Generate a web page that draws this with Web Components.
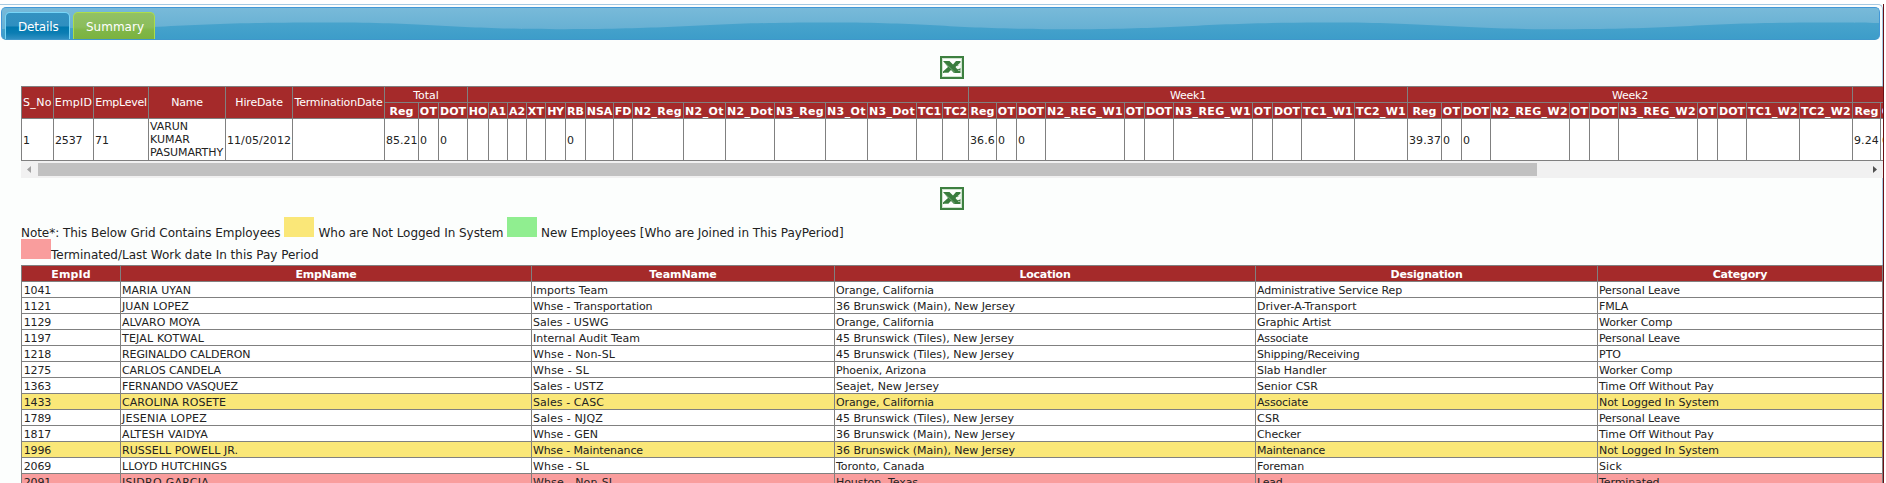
<!DOCTYPE html>
<html lang="en">
<head>
<meta charset="utf-8">
<title>Payroll Summary</title>
<style>
html, body { margin: 0; height: 483px; overflow: hidden; background: #fff; }
body { font: 11px/13px "DejaVu Sans", sans-serif; color: #222; }
</style>
</head>
<body>
<payroll-page></payroll-page>
<script>
const define = (name, html, setup) => {
  const tpl = document.createElement('template');
  tpl.innerHTML = html;
  customElements.define(name, class extends HTMLElement {
    connectedCallback() {
      if (this.shadowRoot) return;
      const root = this.attachShadow({ mode: 'open' });
      root.append(tpl.content.cloneNode(true));
      if (setup) setup.call(this, root);
    }
  });
};

/* A label whose tracking is adjusted so that it takes the width it is given. */
define('fit-text', `<style>:host{display:inline-block;white-space:nowrap;letter-spacing:-.12px}</style><slot></slot>`, function () {
  const w = parseFloat(this.getAttribute('w'));
  if (!w) return;
  this.style.letterSpacing = '0';
  const natural = this.getBoundingClientRect().width;
  this.style.letterSpacing = ((w - natural) / this.textContent.length).toFixed(3) + 'px';
});

define('excel-icon', `<style>:host{display:block;width:24px;height:23px}svg{display:block}</style>
<svg width="24" height="23" viewBox="0 0 24 23">
<rect width="24" height="23" fill="#3d8040"/><rect x="2" y="2" width="20" height="19" fill="#fdfffd"/>
<rect x="2.5" y="2.5" width="19" height="18" fill="none" stroke="#cfe3cf" stroke-width="1"/>
<path d="M15 9.500h5M17 13.500h3" stroke="#8fbb8f" stroke-width="1"/>
<path d="M3 5h6.500l3.500 3.500L16 5h4.500v1.500L15.500 11l2 2.500L20.500 12v5H14l-3-3-3 3H3v-1.500L8 11z" fill="#3a7d3e"/>
<path d="M4.500 6.500l10.500 10M4 16.500h4" stroke="#7db07f" stroke-width=".8" fill="none"/>
<path d="M17 11l3.500-3v3.500L18 13zM18 14.500h2.500" fill="#fff" stroke="#dcebdc" stroke-width=".6"/>
</svg>`);

define('page-tab', `<style>
:host{display:block;box-sizing:border-box;width:65px;height:28px;padding:7px 0 0 12px;border:1px solid #77d5f7;border-bottom:0;border-radius:5px 5px 0 0;color:#fff;font-size:12px;line-height:14px;
background:linear-gradient(#3392c1,#2f8fc0 13px,#0078ae 14px,#0b7db3 20px,#3592c4)}
:host([active]){width:82px;border-color:#acdd4a;background:linear-gradient(#92c165,#8bbd5b 14px,#80b748 17px,#7ab23e)}
</style><slot></slot>`);

define('tab-bar', `<style>
:host{display:flex;gap:3px;box-sizing:border-box;position:relative;width:1879px;height:33px;margin-left:1px;padding:4px 0 0 3px;border:1px solid #4297d7;border-bottom-color:#3f97ca;border-radius:5px;overflow:hidden;background:linear-gradient(#51a9cf,#3d9dc9)}
svg{position:absolute;left:0;top:0}
::slotted(*){position:relative}
</style>
<svg width="1878" height="32"><defs>
<linearGradient id="g" x1="0" y1="0" x2="0" y2="1"><stop offset="0" stop-color="#78bad9"/><stop offset="1" stop-color="#67b0d3"/></linearGradient></defs>
<path fill="url(#g)" d="M0 0H1878V15C1850 14.500 1838 14.500 1820 14.500C1700 14.500 1680 21.200 1563 21.200S1440 14.500 1320 14.500S1180 21.200 1063 21.200S940 14.500 820 14.500S680 21.200 563 21.200S440 14.500 320 14.500C230 14.500 200 17 150 19L0 21Z"/></svg>
<slot></slot>`);

define('colour-swatch', `<style>:host{display:block;width:30px;height:20px;flex:none}</style>`, function () {
  this.style.background = this.getAttribute('colour');
});

define('legend-note', `<style>
:host{display:block;font-size:12px;line-height:14px}
div{display:flex;align-items:baseline;height:22px}
</style>
<div><fit-text w="259.500">Note*: This Below Grid Contains Employees</fit-text><colour-swatch colour="#fae778" style="margin-left:3.500px"></colour-swatch><fit-text w="185" style="margin-left:4.500px">Who are Not Logged In System</fit-text><colour-swatch colour="#90ee90" style="margin-left:3.500px"></colour-swatch><fit-text w="302.500" style="margin-left:4px">New Employees [Who are Joined in This PayPeriod]</fit-text></div>
<div><colour-swatch colour="#f99d9d"></colour-swatch><fit-text w="267.500">Terminated/Last Work date In this Pay Period</fit-text></div>`);

/* Grid whose 1px gaps show through as the rules. */
const gridCss = `
.g{display:grid;gap:1px;background:#808080;border:1px solid #808080;width:max-content}
.c{background:#fff;padding:2px 1px 0;display:flex;align-items:center;box-sizing:border-box;min-width:0}
.h{background:#a52a2a;color:#fff;justify-content:center}
.b{font-weight:bold}`;
const t = (s, w) => s === '' ? '' : `<fit-text${w ? ` w="${w}"` : ''}>${s}</fit-text>`;

define('hours-grid', `<style>:host{display:block;width:1862px;height:75px;overflow:hidden}${gridCss}
.g{grid-template-rows:15px 15px 41px}.tall{grid-row:span 2;padding:0 1px}.name{flex-direction:column;align-items:flex-start;padding-top:1px}</style><div class="g"></div>`, function (root) {
  const x = [21,53,93,148,225,292,384,418,438,467,488,507,526,545,565,585,613,632,683,725,774,825,867,916,942,968,996,1016,1045,1124,1144,1173,1252,1272,1301,1354,1407,1441,1461,1490,1569,1589,1618,1697,1717,1746,1799,1852,1880,1900];
  const g = root.querySelector('.g');
  g.style.gridTemplateColumns = x.slice(1).map((v, i) => v - x[i] - 1 + 'px').join(' ');
  const fixed = [['S_No',29],['EmpID',37.5],['EmpLevel',51.5],['Name',31.5],['HireDate',47.5],['TerminationDate',88]];
  const groups = [['Total',3,25.5],['',16],['Week1',11,36],['Week2',11,36],['',2]];
  const W = { Reg:24, OT:17.5, DOT:26, HO:18.5, A1:16, A2:16, XT:16.5, HY:16.5, RB:17, NSA:25.5, FD:16.5, N2_Reg:48, N2_Ot:39, N2_Dot:46, N3_Reg:48, N3_Ot:39, N3_Dot:46, TC1:23, TC2:23 };
  const week = n => ['Reg','OT','DOT','N2_REG_W'+n,'OT','DOT','N3_REG_W'+n,'OT','DOT','TC1_W'+n,'TC2_W'+n];
  const subs = ['Reg','OT','DOT','HO','A1','A2','XT','HY','RB','NSA','FD','N2_Reg','N2_Ot','N2_Dot','N3_Reg','N3_Ot','N3_Dot','TC1','TC2',...week(1),...week(2),'Reg','OT'];
  const values = Array(49).fill('');
  Object.assign(values, {0:'1',1:t('2537',27.5),2:'71',4:t('11/05/2012',64),6:t('85.21',31.5),7:'0',8:'0',14:'0',25:t('36.6',25),26:'0',27:'0',36:t('39.37',32),37:'0',38:'0',47:t('9.24',25),48:'0'});
  let html = fixed.map(f => `<div class="c h tall">${t(...f)}</div>`).join('');
  html += groups.map(([s, n, w]) => `<div class="c h" style="grid-column:span ${n}">${t(s, w)}</div>`).join('');
  html += subs.map(s => `<div class="c h b">${t(s, W[s] || (s.startsWith('TC') ? 50 : 76))}</div>`).join('');
  html += values.map((v, i) => i === 3 ? `<div class="c name">${t('VARUN',38)}${t('KUMAR',40)}${t('PASUMARTHY',73)}</div>` : `<div class="c">${v}</div>`).join('');
  g.innerHTML = html;
});

define('scroll-strip', `<style>
:host{display:flex;align-items:center;width:1862px;height:17px;background:#f1f1f1}
i{width:1499px;height:13px;background:#c1c1c1;margin-right:auto}
svg{width:17px;height:17px;flex:none}
</style><svg viewBox="0 0 17 17"><path d="M10 5v7L6 8.500z" fill="#a3a3a3"/></svg><i></i><svg viewBox="0 0 17 17"><path d="M7 5v7l4-3.500z" fill="#505050"/></svg>`);

define('employee-grid', `<style>:host{display:block}${gridCss}
.g{grid-template-columns:98px 410px 302px 420px 341px 284px;grid-auto-rows:15px}
.id{padding-left:1.700px}
.y{background:#fae778}.r{background:#f99d9d}</style><div class="g"></div>`, function (root) {
  const W = {'MARIA UYAN':68,'JUAN LOPEZ':66,'ALVARO MOYA':77,'TEJAL KOTWAL':81,'REGINALDO CALDERON':127.5,'CARLOS CANDELA':98,'FERNANDO VASQUEZ':115,'CAROLINA ROSETE':103,'JESENIA LOPEZ':84,'ALTESH VAIDYA':85,'RUSSELL POWELL JR.':115,'LLOYD HUTCHINGS':104,'ISIDRO GARCIA':86,
  'Imports Team':74,'Whse - Transportation':118.5,'Sales - USWG':74.5,'Internal Audit Team':106,'Whse - Non-SL':81,'Whse - SL':55,'Sales - USTZ':69.5,'Sales - CASC':70,'Sales - NJQZ':69,'Whse - GEN':64,'Whse - Maintenance':109,
  'Orange, California':97,'36 Brunswick (Main), New Jersey':178,'45 Brunswick (Tiles), New Jersey':177,'Phoenix, Arizona':89,'Seajet, New Jersey':102,'Toronto, Canada':87.5,'Houston, Texas':81,
  'Administrative Service Rep':144,'Driver-A-Transport':98.5,'Graphic Artist':73,'Associate':50,'Shipping/Receiving':101.5,'Slab Handler':68.5,'Senior CSR':60,'CSR':22,'Checker':43,'Maintenance':67,'Foreman':46,'Lead':24.5,
  'Personal Leave':80,'FMLA':28,'Worker Comp':72.5,'PTO':21,'Time Off Without Pay':113.5,'Not Logged In System':119,'Sick':22,'Terminated':59.5,
  'EmpId':39,'EmpName':60.5,'TeamName':67,'Location':50.5,'Designation':71.5,'Category':54};
  const rows = `1041|MARIA UYAN|Imports Team|Orange, California|Administrative Service Rep|Personal Leave
1121|JUAN LOPEZ|Whse - Transportation|36 Brunswick (Main), New Jersey|Driver-A-Transport|FMLA
1129|ALVARO MOYA|Sales - USWG|Orange, California|Graphic Artist|Worker Comp
1197|TEJAL KOTWAL|Internal Audit Team|45 Brunswick (Tiles), New Jersey|Associate|Personal Leave
1218|REGINALDO CALDERON|Whse - Non-SL|45 Brunswick (Tiles), New Jersey|Shipping/Receiving|PTO
1275|CARLOS CANDELA|Whse - SL|Phoenix, Arizona|Slab Handler|Worker Comp
1363|FERNANDO VASQUEZ|Sales - USTZ|Seajet, New Jersey|Senior CSR|Time Off Without Pay
1433|CAROLINA ROSETE|Sales - CASC|Orange, California|Associate|Not Logged In System
1789|JESENIA LOPEZ|Sales - NJQZ|45 Brunswick (Tiles), New Jersey|CSR|Personal Leave
1817|ALTESH VAIDYA|Whse - GEN|36 Brunswick (Main), New Jersey|Checker|Time Off Without Pay
1996|RUSSELL POWELL JR.|Whse - Maintenance|36 Brunswick (Main), New Jersey|Maintenance|Not Logged In System
2069|LLOYD HUTCHINGS|Whse - SL|Toronto, Canada|Foreman|Sick
2091|ISIDRO GARCIA|Whse - Non-SL|Houston, Texas|Lead|Terminated`.split('\n').map(r => r.split('|'));
  const tone = { 'Not Logged In System': ' y', 'Terminated': ' r' };
  root.querySelector('.g').innerHTML =
    ['EmpId','EmpName','TeamName','Location','Designation','Category'].map(s => `<div class="c h b">${t(s, W[s] + .5)}</div>`).join('') +
    rows.map(r => r.map((s, i) => `<div class="c${i ? '' : ' id'}${tone[r[5]] || ''}">${t(s, (W[s] || 26.5) + 1)}</div>`).join('')).join('');
});

define('payroll-page', `<style>
:host{display:block;width:1884px;height:483px;overflow:hidden;padding-top:4px;box-sizing:border-box}
main{box-sizing:border-box;width:1884px;height:490px;border-right:1px solid #6b0f14;background:#fcfefd}
section{box-sizing:border-box;width:1883px;height:490px;border-top:1px solid #a6c9e2;border-right:1px solid #a6c9e2;border-top-right-radius:5px;padding-top:2px;background:#fcfefd}
.body{margin:16px -1px 0 21px}
excel-icon{margin-left:919px}
hours-grid{margin-top:7px}
.second{margin-top:9px}
legend-note{margin-top:7px;height:48px}
</style>
<main><section>
<tab-bar><page-tab><fit-text w="40.500">Details</fit-text></page-tab><page-tab active><fit-text w="58">Summary</fit-text></page-tab></tab-bar>
<div class="body">
<excel-icon></excel-icon>
<hours-grid></hours-grid>
<scroll-strip></scroll-strip>
<excel-icon class="second"></excel-icon>
<legend-note></legend-note>
<employee-grid></employee-grid>
</div>
</section></main>`);
</script>
</body>
</html>
